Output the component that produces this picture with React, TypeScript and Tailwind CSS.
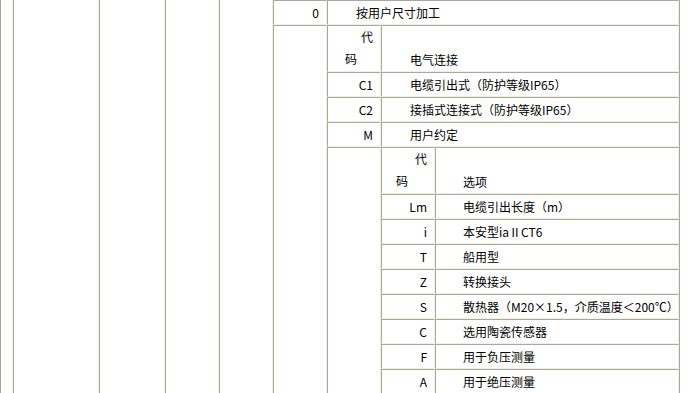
import React from 'react';

const cell = 'border border-[#aca899] border-r-[#f1efe2] border-b-[#f1efe2]';

const level2 = [
  { code: 'C1', text: '电缆引出式（防护等级IP65）' },
  { code: 'C2', text: '接插式连接式（防护等级IP65）' },
  { code: 'M', text: '用户约定' },
];

const level3 = [
  { code: 'Lm', text: '电缆引出长度（m）' },
  { code: 'i', text: '本安型iaⅡCT6' },
  { code: 'T', text: '船用型' },
  { code: 'Z', text: '转换接头' },
  { code: 'S', text: '散热器（M20×1.5，介质温度＜200℃）' },
  { code: 'C', text: '选用陶瓷传感器' },
  { code: 'F', text: '用于负压测量' },
  { code: 'A', text: '用于绝压测量' },
];

const CodeCell: React.FC<{ code: string }> = ({ code }) => (
  <div className={`${cell} text-right pr-[7px] leading-[23px]`}>{code}</div>
);

const HeaderCode: React.FC<{ indent: string }> = ({ indent }) => (
  <div className={`${cell} leading-[22px]`}>
    <div className="text-right pr-[7px]">代</div>
    <div className={indent}>码</div>
  </div>
);

const App: React.FC = () => {
  return (
    <div className="min-h-screen bg-white text-black text-[12px] font-['Noto_Sans_CJK_SC',sans-serif]">
      <div className="grid w-[680px] grid-cols-[13px_86px_66px_54px_54px_54px_54px_54px_244px] grid-rows-[25px_47px_25px_25px_25px_47px_25px_25px_25px_25px_25px_25px_25px_30px] border-r border-r-[#aca899]">
        {/* left columns, cropped from above */}
        <div className={`${cell} border-t-0 row-span-14`} />
        <div className={`${cell} border-t-0 row-span-14`} />
        <div className={`${cell} border-t-0 row-span-14`} />
        <div className={`${cell} border-t-0 row-span-14`} />
        <div className={`${cell} border-t-0 row-span-14`} />

        <CodeCell code="0" />
        <div className={`${cell} col-span-3 pl-[28px] leading-[23px]`}>按用户尺寸加工</div>

        {/* 电气连接 */}
        <div className={`${cell} row-span-13`} />
        <HeaderCode indent="pl-[17px]" />
        <div className={`${cell} col-span-2 flex items-end pl-[28px] leading-[22px]`}>电气连接</div>
        {level2.map((row) => (
          <React.Fragment key={row.code}>
            <CodeCell code={row.code} />
            <div className={`${cell} col-span-2 pl-[28px] leading-[23px]`}>{row.text}</div>
          </React.Fragment>
        ))}

        {/* 选项 */}
        <div className={`${cell} row-span-9`} />
        <HeaderCode indent="pl-[14px]" />
        <div className={`${cell} flex items-end pl-[27px] leading-[22px]`}>选项</div>
        {level3.map((row) => (
          <React.Fragment key={row.code}>
            <CodeCell code={row.code} />
            <div className={`${cell} pl-[27px] leading-[23px]`}>{row.text}</div>
          </React.Fragment>
        ))}
      </div>
    </div>
  );
};

export default App;
